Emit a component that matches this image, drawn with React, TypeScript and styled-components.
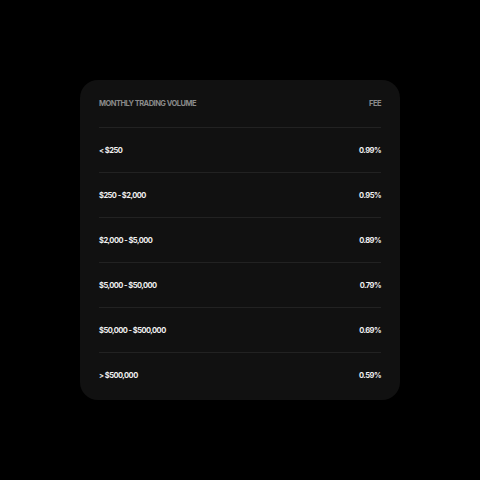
import React from "react";
import styled, { createGlobalStyle } from "styled-components";

const Global = createGlobalStyle`
  html, body { margin: 0; padding: 0; background: #000; }
  body { font-family: Inter, "Noto Sans", sans-serif; }
`;

const Page = styled.div`
  width: 480px;
  height: 480px;
  display: flex;
  align-items: center;
  justify-content: center;
  background: #000;
`;

const Card = styled.div`
  width: 320px;
  box-sizing: border-box;
  background: #111111;
  border-radius: 18px;
  padding: 0 19px 3px;
  display: flex;
  flex-direction: column;
`;

const Row = styled.div<{ $header?: boolean }>`
  display: flex;
  justify-content: space-between;
  align-items: center;
  height: ${(p) => (p.$header ? "47px" : "44px")};
  border-top: ${(p) => (p.$header ? "none" : "1px solid #222222")};
  font-size: 7.5px;
  font-weight: 700;
  letter-spacing: -0.07em;
  color: ${(p) => (p.$header ? "#8a8a8a" : "#f2f2f2")};
  text-transform: ${(p) => (p.$header ? "uppercase" : "none")};
`;

const rows: [string, string][] = [
  ["< $250", "0.99%"],
  ["$250 - $2,000", "0.95%"],
  ["$2,000 - $5,000", "0.89%"],
  ["$5,000 - $50,000", "0.79%"],
  ["$50,000 - $500,000", "0.69%"],
  ["> $500,000", "0.59%"],
];

export default function App() {
  return (
    <>
      <Global />
      <Page>
        <Card>
          <Row $header>
            <span>Monthly Trading Volume</span>
            <span>Fee</span>
          </Row>
          {rows.map(([v, f]) => (
            <Row key={v}>
              <span>{v}</span>
              <span>{f}</span>
            </Row>
          ))}
        </Card>
      </Page>
    </>
  );
}
